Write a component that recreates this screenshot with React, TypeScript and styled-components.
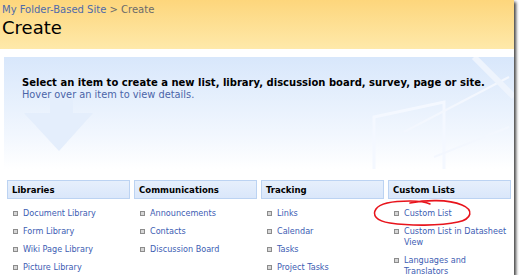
import styled, { createGlobalStyle } from 'styled-components'

const GlobalStyle = createGlobalStyle`
  html, body {
    margin: 0;
    padding: 0;
    background: #fff;
  }
  body {
    font-family: "DejaVu Sans Condensed", "DejaVu Sans", "Liberation Sans", sans-serif;
  }
`

const Frame = styled.div`
  position: relative;
  width: 514px;
  height: 275px;
  overflow: hidden;
  background: #fff;
  box-shadow: 2px 2px 3px rgba(0, 0, 0, 0.75);
`

const TitleBar = styled.div`
  height: 49px;
  box-sizing: border-box;
  padding: 4px 0 0 2px;
  background: linear-gradient(#fdd67c, #fee9aa);
`

const Breadcrumb = styled.div`
  font-family: "DejaVu Sans", sans-serif;
  font-size: 10px;
  line-height: 11px;
  color: #6b6b6b;
`

const CrumbLink = styled.span`
  color: #4f6aaa;
`

const PageTitle = styled.h1`
  margin: 2px 0 0;
  font-family: "DejaVu Sans", sans-serif;
  font-weight: normal;
  font-size: 18px;
  line-height: 22px;
  color: #000;
`

const IntroPanel = styled.div`
  position: relative;
  margin: 8px 0 0 4px;
  height: 112px;
  box-sizing: border-box;
  padding: 19px 0 0 18px;
  background: linear-gradient(#d8e7fb, #f2f7fe 70%, #fff);
  overflow: hidden;
`

const Decor = styled.svg`
  position: absolute;
  left: 0;
  top: 0;
`

const IntroStrong = styled.div`
  position: relative;
  font-family: "DejaVu Sans", sans-serif;
  font-weight: bold;
  font-size: 10px;
  line-height: 13px;
  white-space: nowrap;
  color: #000;
`

const IntroHint = styled.div`
  position: relative;
  font-family: "DejaVu Sans", sans-serif;
  font-size: 9.8px;
  line-height: 12px;
  color: #4a64a8;
`

const Columns = styled.div`
  display: grid;
  grid-template-columns: repeat(4, 123px);
  column-gap: 4px;
  padding: 11px 0 0 7px;
`

const Column = styled.div`
  display: flex;
  flex-direction: column;
`

const ColumnHead = styled.div`
  height: 19px;
  box-sizing: border-box;
  border: 1px solid #bcd3f2;
  background: linear-gradient(#e6effc, #dae7fa);
  padding-left: 4px;
  font-weight: bold;
  font-size: 9.5px;
  line-height: 17px;
  color: #000;
`

const ItemList = styled.ul`
  list-style: none;
  margin: 0;
  padding: 9px 0 0;
  display: flex;
  flex-direction: column;
  gap: 7px;
`

const Item = styled.li`
  display: flex;
  align-items: flex-start;
`

const Bullet = styled.span`
  flex: none;
  width: 3px;
  height: 3px;
  margin: 3px 5px 0 6px;
  border: 1px solid #8c8c8c;
  background: #d6d6d6;
`

const ItemLink = styled.span`
  font-size: 9px;
  line-height: 11px;
  color: #3d5db3;
`

const Scribble = styled.svg`
  position: absolute;
  left: 370px;
  top: 197px;
`

const groups: { title: string; items: string[] }[] = [
  { title: 'Libraries', items: ['Document Library', 'Form Library', 'Wiki Page Library', 'Picture Library'] },
  { title: 'Communications', items: ['Announcements', 'Contacts', 'Discussion Board'] },
  { title: 'Tracking', items: ['Links', 'Calendar', 'Tasks', 'Project Tasks'] },
  { title: 'Custom Lists', items: ['Custom List', 'Custom List in Datasheet View', 'Languages and Translators'] },
]

const App = () => {
  return (
    <>
      <GlobalStyle />
      <Frame>
        <TitleBar>
          <Breadcrumb>
            <CrumbLink>My Folder-Based Site</CrumbLink> &gt; Create
          </Breadcrumb>
          <PageTitle>Create</PageTitle>
        </TitleBar>
        <IntroPanel>
          <Decor width="510" height="112" viewBox="0 0 510 112">
            <path d="M46 38 H69 V56 H89 L55 94 L20 56 H46 Z" fill="#e4eefc" />
            <path d="M370 112 V60 L440 45 V112" fill="none" stroke="#f4f8ff" strokeWidth="3" />
            <path d="M400 75 L505 20" stroke="#f3f7fe" strokeWidth="2" />
            <path d="M430 100 L505 70" stroke="#f3f7fe" strokeWidth="2" />
            <path d="M470 0 L510 40" stroke="#eef4fd" strokeWidth="6" />
          </Decor>
          <IntroStrong>Select an item to create a new list, library, discussion board, survey, page or site.</IntroStrong>
          <IntroHint>Hover over an item to view details.</IntroHint>
        </IntroPanel>
        <Columns>
          {groups.map((g) => (
            <Column key={g.title}>
              <ColumnHead>{g.title}</ColumnHead>
              <ItemList>
                {g.items.map((it) => (
                  <Item key={it}>
                    <Bullet />
                    <ItemLink>{it}</ItemLink>
                  </Item>
                ))}
              </ItemList>
            </Column>
          ))}
        </Columns>
        <Scribble width="110" height="32" viewBox="0 0 110 32">
          <path
            d="M40 6 C55 3 78 2 92 8 C104 13 102 22 88 25 C70 29 40 29 20 26 C6 24 2 18 6 12 C10 6 22 4 40 4 C48 4 56 5 60 7"
            fill="none"
            stroke="#e8141c"
            strokeWidth="1.6"
            strokeLinecap="round"
          />
        </Scribble>
      </Frame>
    </>
  )
}

export default App
